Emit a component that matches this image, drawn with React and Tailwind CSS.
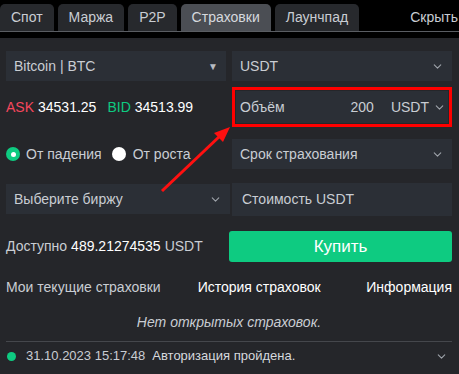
import { ChevronDown } from "lucide-react"

const tabs = ["Спот", "Маржа", "P2P", "Страховки", "Лаунчпад"]

const Chevron = () => <ChevronDown size={13} strokeWidth={2} className="text-[#9ea3aa]" />

const App = () => {
  return (
    <div
      className="relative w-[459px] h-[374px] bg-[#25262a] text-[14px] text-[#c9cdd3] overflow-hidden"
      style={{ fontFamily: '"Liberation Sans", Arial, sans-serif' }}
    >
      {/* вкладки */}
      <div className="bg-black h-[38px] pt-[4px]">
        <div className="flex items-end h-[28px] border-b border-[#5a5d62]">
          {tabs.map((t) => (
            <div
              key={t}
              className={
                "h-[27px] mr-[4px] px-[11px] flex items-center rounded-t-[5px] " +
                (t === "Страховки" ? "bg-[#4b4e54] text-[#d6d9de]" : "bg-[#27292d] text-[#c9cdd3]")
              }
            >
              {t}
            </div>
          ))}
          <div className="ml-auto h-[27px] flex items-center pr-[1px] text-[#c9cdd3]">Скрыть</div>
        </div>
      </div>

      <div className="px-[6px] pt-[13px]">
        <div className="grid grid-cols-[220px_220px] gap-x-[6px]">
          <div className="h-[30px] bg-[#2b2f36] flex items-center justify-between pl-[8px] pr-[8px]">
            <span>Bitcoin | BTC</span>
            <span className="text-[10px] text-[#b8bcc2]">▼</span>
          </div>
          <div className="h-[30px] bg-[#2b2f36] flex items-center justify-between pl-[8px] pr-[8px]">
            <span>USDT</span>
            <Chevron />
          </div>

          <div className="h-[40px] mt-[6px] flex items-center text-[14px]">
            <span className="text-[#f6465d]">ASK</span>
            <span className="text-white ml-[4px]">34531.25</span>
            <span className="text-[#0ecb81] ml-[11px]">BID</span>
            <span className="text-white ml-[4px]">34513.99</span>
          </div>
          <div className="h-[40px] mt-[6px] border-[3px] border-[#ff0000] p-[1px]">
            <div className="h-full bg-[#2b2f36] flex items-center pl-[4px] pr-[2px]">
              <span>Объём</span>
              <span className="ml-auto">200</span>
              <span className="ml-[17px] mr-[4px]">USDT</span>
              <Chevron />
            </div>
          </div>

          <div className="h-[30px] mt-[12px] flex items-center">
            <span className="w-[14px] h-[14px] rounded-full bg-[#0ecb81] flex items-center justify-center">
              <span className="w-[5px] h-[5px] rounded-full bg-white" />
            </span>
            <span className="ml-[6px]">От падения</span>
            <span className="ml-[10px] w-[14px] h-[14px] rounded-full bg-white" />
            <span className="ml-[7px]">От роста</span>
          </div>
          <div className="h-[30px] mt-[12px] bg-[#2b2f36] flex items-center justify-between pl-[8px] pr-[8px]">
            <span>Срок страхования</span>
            <Chevron />
          </div>

          <div className="h-[30px] mt-[15px] mr-[-4px] bg-[#2b2f36] flex items-center justify-between pl-[8px] pr-[8px]">
            <span>Выберите биржу</span>
            <Chevron />
          </div>
          <div className="h-[33px] mt-[14px] bg-[#2b2f36] flex items-center pl-[10px]">
            <span>Стоимость USDT</span>
          </div>

          <div className="h-[31px] mt-[15px] flex items-center">
            <span>Доступно</span>
            <span className="text-white ml-[4px]">489.21274535</span>
            <span className="ml-[4px]">USDT</span>
          </div>
          <div className="h-[31px] mt-[15px] ml-[-3px] bg-[#0ecb81] rounded-[3px] flex items-center justify-center text-white text-[17px]">
            Купить
          </div>
        </div>

        <div className="flex items-center h-[20px] mt-[15px] w-[446px]">
          <span>Мои текущие страховки</span>
          <span className="text-white ml-[37px]">История страховок</span>
          <span className="text-white ml-auto">Информация</span>
        </div>

        <div className="text-center italic mt-[15px] h-[20px] w-[446px]">Нет открытых страховок.</div>

        <div className="mt-[9px] w-[446px] border-t border-[#45474c]" />

        <div className="flex items-center h-[28px] w-[446px] text-[13px]">
          <span className="w-[9px] h-[9px] rounded-full bg-[#0ecb81] ml-[1px]" />
          <span className="ml-[10px] text-[#c9cdd3]">31.10.2023 15:17:48</span>
          <span className="ml-[7px] text-[#d6d9de]">Авторизация пройдена.</span>
          <span className="ml-auto mr-[4px]">
            <Chevron />
          </span>
        </div>
      </div>

      {/* стрелка */}
      <svg className="absolute left-0 top-0 pointer-events-none" width="459" height="374">
        <line x1="162" y1="191" x2="221" y2="135" stroke="#ff1010" strokeWidth="3" />
        <polygon points="230,127 214,133 223,142" fill="#ff1010" />
      </svg>
    </div>
  )
}

export default App
